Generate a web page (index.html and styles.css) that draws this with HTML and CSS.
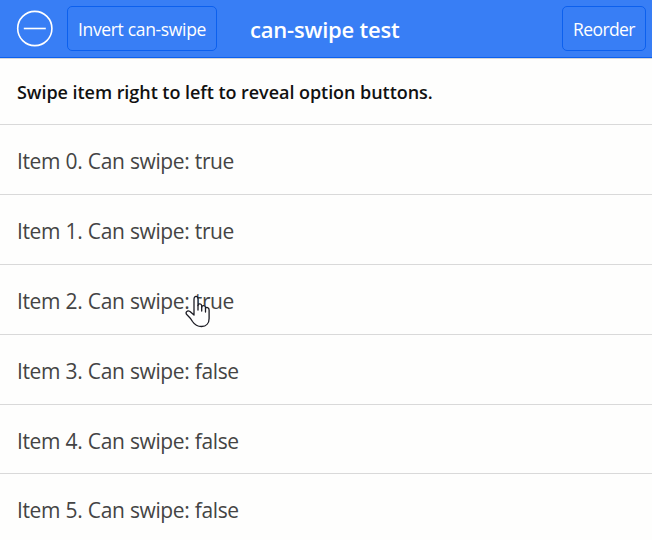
FILE: index.html
```html
<!DOCTYPE html>
<html lang="en">
<head>
<meta charset="utf-8">
<title>can-swipe test</title>
<link rel="stylesheet" href="styles.css">
</head>
<body>
<header class="bar">
  <div class="bar-left">
    <button class="icon-button" aria-label="Toggle delete">
      <svg width="38" height="38" viewBox="0 0 38 38" fill="none" stroke="#fff" stroke-width="1.6"><circle cx="19.800" cy="19.500" r="17.100"/><path d="M8.800 19.500h22"/></svg>
    </button>
    <button class="button"><span>Invert can-swipe</span></button>
  </div>
  <h1 class="title">can-swipe test</h1>
  <button class="button button-reorder"><span>Reorder</span></button>
</header>
<main>
  <p class="intro">Swipe item right to left to reveal option buttons.</p>
  <ul class="list">
    <li class="item"><span>Item 0. Can swipe: true</span></li>
    <li class="item"><span>Item 1. Can swipe: true</span></li>
    <li class="item"><span>Item 2. Can swipe: true</span>
      <svg class="cursor" width="26" height="34" viewBox="0 0 26 34" fill="#fff" stroke="#1c1c24" stroke-width="1.3" stroke-linejoin="round" stroke-linecap="round"><path d="M9 20V4.200C9 .4 13 .4 13 4.200V10.500C13.300 8.200 16.500 8.400 16.700 10.800V12C17.200 9.900 20.200 10.200 20.500 12.300V13.400C21.300 11.700 24.100 12.300 24.100 15V23.500C24.100 28 21.500 31.500 16.500 31.500C11.500 31.500 9.500 29.500 7.500 26.500C6 24 4.500 22.200 2 19.800C-.2 17.300 2.300 14.900 5 16.500L9 20"/><path d="M13 10.500V15M16.700 12V16M20.500 13.400V17"/></svg>
    </li>
    <li class="item"><span>Item 3. Can swipe: false</span></li>
    <li class="item item-short"><span>Item 4. Can swipe: false</span></li>
    <li class="item"><span>Item 5. Can swipe: false</span></li>
  </ul>
</main>
</body>
</html>
```
FILE: styles.css
```css
* { box-sizing: border-box; }
body {
  margin: 0;
  height: 540px;
  overflow: hidden;
  background: #fefefd;
  color: #444;
  font-family: "Open Sans", "Noto Sans", sans-serif;
}
.bar {
  display: flex;
  justify-content: space-between;
  height: 58px;
  padding: 6px 6px 0 15px;
  background: #387ef5;
  border-bottom: 1px solid #0c60ee;
  box-shadow: 0 1px #d5d6d8;
  color: #fff;
}
.bar-left { display: flex; width: 235px; }
button { font: inherit; color: inherit; background: none; }
.icon-button {
  width: 38px;
  height: 38px;
  margin: 3px 14px 0 0;
  padding: 0;
  border: 0;
}
.icon-button svg { display: block; }
.button {
  width: 150px;
  height: 45px;
  padding: 0;
  border: 1px solid #0c60ee;
  border-radius: 5px;
  font-size: 17.5px;
  line-height: 24px;
  letter-spacing: -0.34px;
  white-space: nowrap;
}
.button-reorder { width: 84px; letter-spacing: -0.6px; }
.title {
  flex: 1;
  margin: 0;
  padding-top: 8px;
  font-size: 22px;
  line-height: 30px;
  font-weight: 600;
  letter-spacing: -0.2px;
  white-space: nowrap;
}
.intro {
  height: 67px;
  margin: 0;
  padding: 20px 17px;
  border-bottom: 1px solid #d9d9d9;
  color: #111;
  font-size: 18px;
  line-height: 28px;
  font-weight: 600;
  letter-spacing: -0.05px;
  white-space: nowrap;
}
.list { margin: 0; padding: 0; list-style: none; }
.item {
  position: relative;
  height: 70px;
  padding: 21px 17px 0;
  border-bottom: 1px solid #d9d9d9;
  font-size: 21px;
  line-height: 30px;
  letter-spacing: -0.42px;
  word-spacing: 0.6px;
  white-space: nowrap;
}
.item-short { height: 69px; }
.cursor { position: absolute; left: 185px; top: 30px; }
```
